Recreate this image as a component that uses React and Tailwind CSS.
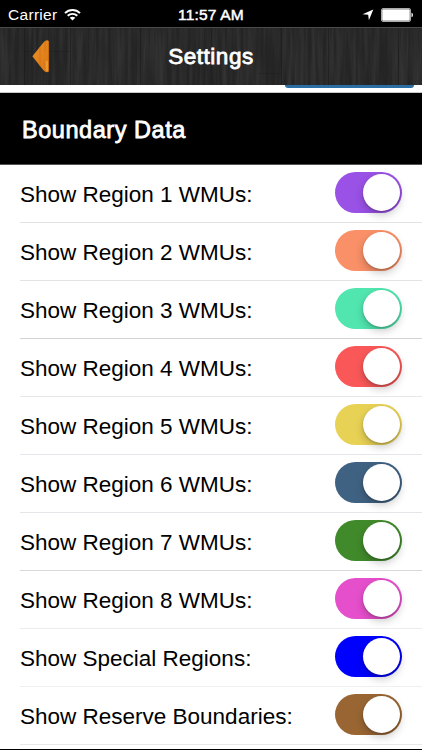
import React, { useState } from "react";

const regions = [
  { id: 1, label: "Show Region 1 WMUs:", color: "bg-[#9a51e6]", line: "border-[#e3e3e5]" },
  { id: 2, label: "Show Region 2 WMUs:", color: "bg-[#f99067]", line: "border-[#e3e3e5]" },
  { id: 3, label: "Show Region 3 WMUs:", color: "bg-[#51e6b0]", line: "border-[#d3d3d5]" },
  { id: 4, label: "Show Region 4 WMUs:", color: "bg-[#fa5858]", line: "border-[#e8e8ea]" },
  { id: 5, label: "Show Region 5 WMUs:", color: "bg-[#e8d255]", line: "border-[#e6e6ec]" },
  { id: 6, label: "Show Region 6 WMUs:", color: "bg-[#406282]", line: "border-[#e6e6ea]" },
  { id: 7, label: "Show Region 7 WMUs:", color: "bg-[#418a2b]", line: "border-[#d9d9db]" },
  { id: 8, label: "Show Region 8 WMUs:", color: "bg-[#e64fcb]", line: "border-[#ececee]" },
  { id: 9, label: "Show Special Regions:", color: "bg-[#0000fe]", line: "border-[#efeff0]" },
  { id: 10, label: "Show Reserve Boundaries:", color: "bg-[#996633]", line: "border-[#e8e8e8]" },
];

function StatusBar() {
  return (
    <div className="grid h-[27px] shrink-0 grid-cols-3 items-center bg-black px-[8px] pt-[3px] text-[15.5px] leading-none">
      <div className="flex items-center">
        <span className="tracking-[0.3px]">Carrier</span>
        <svg className="ml-[7px] -mt-[2px]" width="17" height="13" viewBox="0 0 17 13" fill="none" stroke="white" strokeWidth="1.9">
          <path d="M1 5.1C5.2 0.9 11.8 0.9 16 5.1" />
          <path d="M3.7 7.8C6.4 5.2 10.6 5.2 13.3 7.8" />
          <path d="M8.5 12.6L5.7 9.8C7.2 8.4 9.8 8.4 11.3 9.8Z" fill="white" stroke="none" />
        </svg>
      </div>
      <span className="text-center whitespace-nowrap tracking-[0.2px] [-webkit-text-stroke:0.5px_white]">11:57 AM</span>
      <div className="-mt-[1px] flex items-center justify-end">
        <svg width="12" height="12" viewBox="0 0 12 12">
          <path d="M11.3 0.5L6.9 11.2L6.2 5.8L0.6 5.2Z" fill="white" />
        </svg>
        <svg className="ml-[7px]" width="33" height="14" viewBox="0 0 33 14">
          <rect x="0.5" y="0.5" width="29" height="13" rx="1.5" fill="none" stroke="#aaa" />
          <rect x="1.2" y="1.2" width="27.6" height="11.6" rx="0.8" fill="white" />
          <path d="M30.5 4.8C32.4 5.1 32.4 8.9 30.5 9.2Z" fill="white" />
        </svg>
      </div>
    </div>
  );
}

function Header() {
  return (
    <header className="relative flex h-[58px] shrink-0 items-center justify-center border-t border-[#4a4a4a] bg-[#242424]">
      {/* wood planks */}
      <svg className="absolute inset-0" width="422" height="57" viewBox="0 0 422 57">
        <defs>
          <filter id="grain" x="0" y="0" width="100%" height="100%">
            <feTurbulence type="fractalNoise" baseFrequency="0.25 0.014" numOctaves="3" seed="8" />
            <feColorMatrix values="0 0 0 0 0.4  0 0 0 0 0.4  0 0 0 0 0.4  0.22 0 0 0 -0.07" />
          </filter>
        </defs>
        <rect width="422" height="57" filter="url(#grain)" />
        <path d="M24.5 0V57M70.5 0V57M140.5 0V57M211.5 0V57M281.5 0V57M328.5 0V57M398.5 0V57" stroke="#1b1b1b" strokeOpacity="0.6" />
        <path d="M25 23.5H70M259 45.5H281" stroke="#1d1d1d" strokeOpacity="0.5" />
      </svg>
      <button aria-label="Back" className="absolute left-[32px] top-[12px]">
        <svg width="18" height="33" viewBox="0 0 18 33">
          <defs>
            <linearGradient id="back" x1="0" y1="0" x2="1" y2="1">
              <stop offset="0" stopColor="#e98d28" />
              <stop offset="1" stopColor="#dd7914" />
            </linearGradient>
          </defs>
          <path d="M0.4 16.2L11.4 2.4Q13.4 0.3 15.3 0.3Q17 0.4 17 2V30.5Q17 32.3 14.8 32.2Q12.6 32 11.2 30Z" fill="url(#back)" />
          <path d="M13 1.2V12M13 21.5V31.2M8 7V26" stroke="#c96d13" strokeWidth="0.6" />
          <path d="M13.5 21H16V31.2H13.5Z" fill="#efa53d" fillOpacity="0.7" />
          <path d="M16.6 1V31.4" stroke="#b9650f" strokeWidth="0.8" />
        </svg>
      </button>
      <h1 className="relative pt-[2px] text-[22.5px] leading-none tracking-[0.5px] [-webkit-text-stroke:0.8px_white]">Settings</h1>
    </header>
  );
}

function Toggle({ on, color, label, onClick }) {
  return (
    <button
      role="switch"
      aria-checked={on}
      aria-label={label}
      onClick={onClick}
      className={`flex h-[41px] w-[67px] shrink-0 items-center rounded-full px-[2px] ${
        on ? `justify-end ${color}` : "justify-start bg-gray-200"
      }`}
    >
      <span className="h-[37px] w-[37px] rounded-full bg-white shadow-[0_4px_8px_rgba(0,0,0,0.22),0_1px_2px_rgba(0,0,0,0.2)]" />
    </button>
  );
}

function App() {
  const [off, setOff] = useState([]);

  const toggle = (id) => {
    setOff(off.includes(id) ? off.filter((x) => x !== id) : [...off, id]);
  };

  return (
    <div className="flex h-[750px] w-[422px] flex-col overflow-hidden bg-white font-['Liberation_Sans',Arial,sans-serif] text-white">
      <StatusBar />
      <Header />

      {/* Bottom edge of the button scrolled under the header */}
      <div className="h-[8px] shrink-0 border-b border-[#c8c8cc] bg-white">
        <div className="ml-[285px] h-[3px] w-[129px] rounded-b-[4px] bg-[#2a6ea6]" />
      </div>

      <div className="flex h-[72px] shrink-0 items-center border-b border-[#555] bg-black pt-[4px] pl-[22px]">
        <h2 className="text-[23.5px] tracking-[0.55px] [-webkit-text-stroke:0.8px_white]">Boundary Data</h2>
      </div>

      <ul>
        {regions.map((region) => (
          <li
            key={region.id}
            className={`ml-[20px] flex h-[58px] items-center justify-between border-b pr-[20px] pb-[2px] ${region.line}`}
          >
            <span className="pt-[6px] text-[22.5px] leading-none whitespace-nowrap text-black">{region.label}</span>
            <Toggle
              on={!off.includes(region.id)}
              color={region.color}
              label={region.label}
              onClick={() => toggle(region.id)}
            />
          </li>
        ))}
      </ul>
      <div className="mt-auto h-px bg-black" />
    </div>
  );
}

export default App;
